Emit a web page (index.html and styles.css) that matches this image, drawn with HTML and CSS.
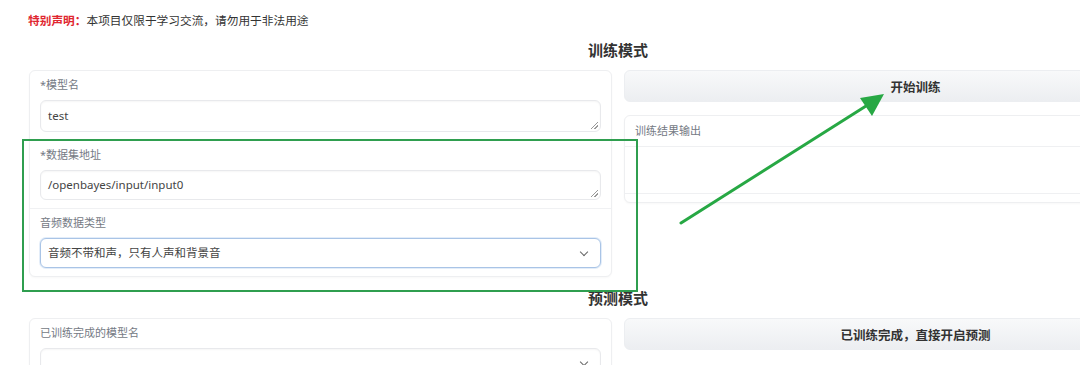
FILE: index.html
```html
<!DOCTYPE html>
<html lang="zh">
<head>
  <meta charset="UTF-8">
  <title>训练模式</title>
  <link rel="stylesheet" href="styles.css">
</head>
<body>
  <div class="page">
    <p class="notice"><b>特别声明：</b>本项目仅限于学习交流，请勿用于非法用途</p>

    <h2>训练模式</h2>
    <div class="row">
      <div class="box">
        <div class="block">
          <label>*模型名</label>
          <div class="field area">test<span class="grip"></span></div>
        </div>
        <div class="block">
          <label>*数据集地址</label>
          <div class="field area short">/openbayes/input/input0<span class="grip"></span></div>
        </div>
        <div class="block">
          <label>音频数据类型</label>
          <div class="field select focus">音频不带和声，只有人声和背景音<span class="chev"></span></div>
        </div>
      </div>
      <div class="col">
        <button class="btn">开始训练</button>
        <div class="box out">
          <label>训练结果输出</label>
          <div class="out-area"></div>
        </div>
      </div>
    </div>

    <h2 class="second">预测模式</h2>
    <div class="row">
      <div class="box">
        <div class="block">
          <label>已训练完成的模型名</label>
          <div class="field select"><span class="chev"></span></div>
        </div>
      </div>
      <div class="col">
        <button class="btn">已训练完成，直接开启预测</button>
      </div>
    </div>
  </div>

  <!-- annotation drawn over the screenshot -->
  <svg class="mark" width="1080" height="365" viewBox="0 0 1080 365">
    <rect x="23" y="140" width="614" height="151" fill="none" stroke="#2f9e4f" stroke-width="2"/>
    <line x1="681" y1="223" x2="866" y2="106" stroke="#27a844" stroke-width="3" stroke-linecap="round"/>
    <polygon points="884,94 860,98 872,116" fill="#27a844"/>
  </svg>
</body>
</html>
```

FILE: styles.css
```css
* { box-sizing: border-box; }

body {
  margin: 0;
  background: #fff;
  font-family: "Noto Sans", "Noto Sans CJK SC", sans-serif;
  color: #374151;
  overflow: hidden;
  width: 1080px;
  height: 365px;
}

.page {
  width: 1207px;
  padding: 12px 0 0 29px;
}

.notice {
  margin: 0 0 0 -1px;
  font-size: 11.7px;
  line-height: 16px;
  color: #333;
}

.notice b {
  color: #e0262f;
}

h2 {
  margin: 12px 0 10px;
  text-align: center;
  font-size: 15px;
  line-height: 20px;
  font-weight: bold;
  color: #333;
}

h2.second {
  margin: 11px 0 10px;
}

.row {
  display: grid;
  grid-template-columns: 583px 583px;
  gap: 12px;
  align-items: start;
}

.box {
  border: 1px solid #eeeff1;
  border-radius: 6px;
  background: #fff;
  box-shadow: 0 1px 2px rgba(0,0,0,0.03);
}

.block {
  padding: 7px 10px 8px;
  border-top: 1px solid #f0f1f3;
}

.block:first-child {
  border-top: none;
}

label {
  display: block;
  font-size: 11px;
  line-height: 14px;
  color: #757a84;
  margin-bottom: 8px;
}

.field {
  position: relative;
  height: 32px;
  padding: 0 7px;
  border: 1px solid #e8e9ec;
  border-radius: 6px;
  background: #fff;
  box-shadow: inset 0 1px 2px rgba(0,0,0,0.04);
  font-size: 11.5px;
  line-height: 30px;
  color: #444;
}

.field.short {
  height: 30px;
  line-height: 28px;
}

.field.select {
  height: 30px;
  line-height: 28px;
}

.field.focus {
  border-color: #a9c4e6;
  box-shadow: 0 0 0 1px #e3edf9;
}

.grip {
  position: absolute;
  right: 2px;
  bottom: 2px;
  width: 7px;
  height: 7px;
  background: linear-gradient(135deg, transparent 45%, #999 45%, #999 55%, transparent 55%, transparent 70%, #999 70%, #999 80%, transparent 80%);
}

.chev {
  position: absolute;
  right: 13px;
  top: 10px;
  width: 6px;
  height: 6px;
  border-right: 1.3px solid #666;
  border-bottom: 1.3px solid #666;
  transform: rotate(45deg);
}

.col {
  display: flex;
  flex-direction: column;
  gap: 13px;
}

.btn {
  height: 32px;
  width: 100%;
  border: 1px solid #eceef1;
  border-radius: 6px;
  background: linear-gradient(#f8f9fa, #eceef1);
  font-family: inherit;
  font-size: 12.5px;
  font-weight: bold;
  color: #333;
}

.out {
  padding: 8px 10px 9px;
  height: 88px;
}

.out label {
  margin-bottom: 8px;
}

.out-area {
  border-top: 1px solid #eff0f2;
  border-bottom: 1px solid #eff0f2;
  margin: 0 -10px;
  height: 48px;
}

.mark {
  position: absolute;
  left: 0;
  top: 0;
  pointer-events: none;
}
```
